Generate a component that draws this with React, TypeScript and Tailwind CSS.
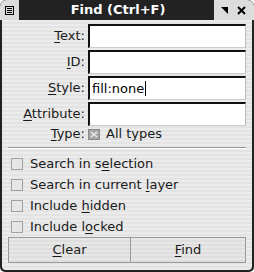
const font = { fontFamily: "'DejaVu Sans', Verdana, sans-serif" };

const Field = ({ label, u, value, cursor }: { label: string; u: number; value?: string; cursor?: boolean }) => (
  <div className="flex items-center h-[26px]">
    <div className="w-[80px] pr-[3px] text-right text-[13px] text-[#1a1a1a]">
      {label.slice(0, u)}
      <span className="underline underline-offset-2">{label[u]}</span>
      {label.slice(u + 1)}:
    </div>
    <div className="w-[158px] h-[24px] bg-white border-t-2 border-l-2 border-[#111] border-r border-b border-r-[#bbb] border-b-[#ccc] flex items-center pl-[2px] text-[13px] text-black">
      {value}
      {cursor && <span className="inline-block w-px h-[15px] bg-black ml-px" />}
    </div>
  </div>
);

const Check = ({ pre, u, post }: { pre: string; u: string; post: string }) => (
  <div className="flex items-center h-[21px] pl-[3px] gap-[7px] text-[13px] text-[#1a1a1a]">
    <span className="w-[12px] h-[12px] border border-[#a0a0a0] bg-[#e6e6e6]" />
    <span>
      {pre}
      <span className="underline underline-offset-2">{u}</span>
      {post}
    </span>
  </div>
);

const btnBg = "bg-[image:repeating-linear-gradient(to_bottom,#e6e6e6_0px,#e6e6e6_2px,#dedede_2px,#dedede_4px)]";

export default function App() {
  return (
    <div className="w-[254px] h-[272px] bg-[#222] rounded-t-[6px] rounded-b-[5px] flex flex-col overflow-hidden" style={font}>
      {/* title bar */}
      <div className="h-[20px] flex items-stretch shrink-0">
        <div className="w-[19px] bg-[#dcdcdc] rounded-tl-[6px] flex items-center justify-center">
          <div className="w-[9px] h-[9px] border border-black flex flex-col justify-center gap-px px-px">
            <div className="h-px bg-black" />
            <div className="h-px bg-black" />
            <div className="h-px bg-black" />
          </div>
        </div>
        <div className="flex-1 flex items-center justify-center text-white font-bold text-[13px] pl-[3px]">Find (Ctrl+F)</div>
        <div className="w-[40px] bg-[#dcdcdc] rounded-tr-[6px] flex items-center justify-end gap-[9px] pr-[8px]">
          <svg width="7" height="7" viewBox="0 0 7 7"><path d="M0 0H7V7Z" fill="#000" /></svg>
          <svg width="9" height="9" viewBox="0 0 9 9"><path d="M1 1L8 8M8 1L1 8" stroke="#000" strokeWidth="2" /></svg>
        </div>
      </div>
      {/* body */}
      <div className="flex-1 mx-[2px] mb-[2px] rounded-b-[4px] bg-[image:repeating-linear-gradient(to_bottom,#ebebeb_0px,#ebebeb_2px,#e3e3e3_2px,#e3e3e3_4px)] pt-[3px] px-[6px] flex flex-col">
        <Field label="Text" u={0} />
        <Field label="ID" u={0} />
        <Field label="Style" u={0} value="fill:none" cursor />
        <Field label="Attribute" u={0} />
        <div className="flex items-center h-[14px] text-[13px] text-[#1a1a1a]">
          <div className="w-[80px] pr-[3px] text-right">
            <span className="underline underline-offset-2">T</span>ype:
          </div>
          <span className="w-[12px] h-[11px] bg-[#a8a8a8] border border-[#888] flex items-center justify-center">
            <svg width="8" height="7" viewBox="0 0 8 7"><path d="M1 1L7 6M7 1L1 6" stroke="#e8e8e8" strokeWidth="1.5" /></svg>
          </span>
          <span className="ml-[6px]">All types</span>
        </div>
        <div className="mt-[6px] border-t border-[#999] border-b border-b-white" />
        <div className="mt-[4px] flex flex-col">
          <Check pre="Search in s" u="e" post="lection" />
          <Check pre="Search in current " u="l" post="ayer" />
          <Check pre="Include " u="h" post="idden" />
          <Check pre="Include l" u="o" post="cked" />
        </div>
        <div className="flex h-[26px] text-[13px] text-[#1a1a1a]">
          <button className={`w-[123px] border border-[#999] flex items-center justify-center ${btnBg}`}>
            <span><span className="underline underline-offset-2">C</span>lear</span>
          </button>
          <button className={`flex-1 border border-l-0 border-[#999] flex items-center justify-center ${btnBg}`}>
            <span><span className="underline underline-offset-2">F</span>ind</span>
          </button>
        </div>
      </div>
    </div>
  );
}
